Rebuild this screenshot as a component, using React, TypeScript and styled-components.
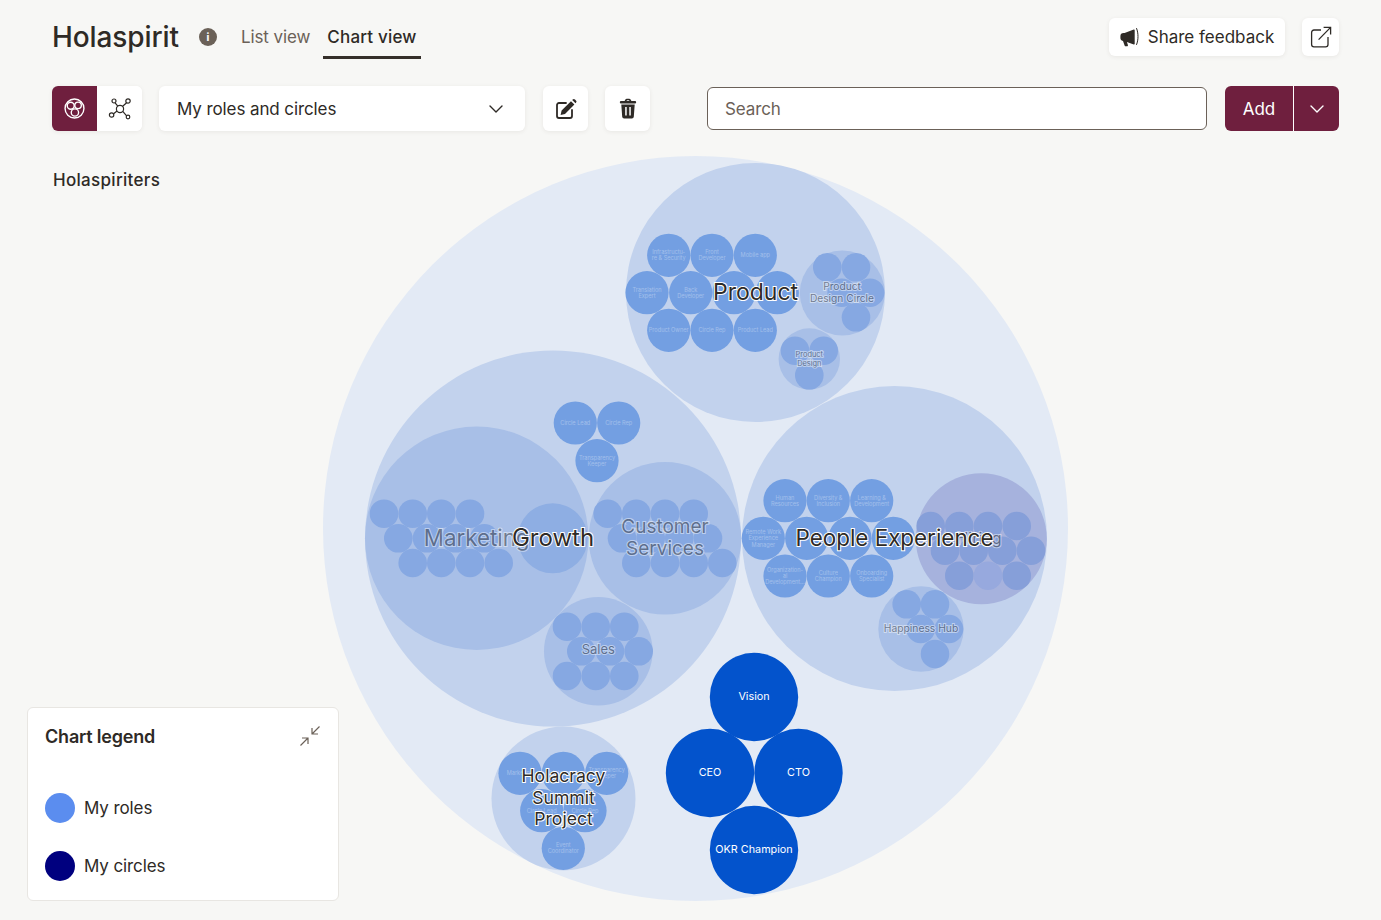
import React from 'react'
import styled, { createGlobalStyle, css } from 'styled-components'
import { ChevronDown } from 'lucide-react'

const FONT = `Inter, "Liberation Sans", sans-serif`

const GlobalStyle = createGlobalStyle`
	html, body {
		margin: 0;
		background: #f7f7f5;
		color: #2e2a26;
		font-family: ${FONT};
	}
	* { box-sizing: border-box; }
`

type Dot = [number, number]
type Role = { x: number; y: number; lines?: string[] }

const ROLE_R = 21.6
const SUB_R = 14.3

const productRoles: Role[] = [
	{ x: 668.7, y: 255.3, lines: ['Infrastructu-', 're & Security'] },
	{ x: 712, y: 255.3, lines: ['Front', 'Developer'] },
	{ x: 755.3, y: 255.3, lines: ['Mobile app'] },
	{ x: 647, y: 292.7, lines: ['Translation', 'Expert'] },
	{ x: 690.7, y: 292.7, lines: ['Back', 'Developer'] },
	{ x: 734, y: 292.7 },
	{ x: 777.3, y: 292.7 },
	{ x: 668.7, y: 330.3, lines: ['Product Owner'] },
	{ x: 712, y: 330.3, lines: ['Circle Rep'] },
	{ x: 755.3, y: 330.3, lines: ['Product Lead'] },
]

const growthRoles: Role[] = [
	{ x: 575.3, y: 423, lines: ['Circle Lead'] },
	{ x: 618.7, y: 423, lines: ['Circle Rep'] },
	{ x: 597, y: 460.7, lines: ['Transparency', 'Keeper'] },
]

const peopleRoles: Role[] = [
	{ x: 785, y: 500.7, lines: ['Human', 'Resources'] },
	{ x: 828.3, y: 500.7, lines: ['Diversity &', 'Inclusion'] },
	{ x: 871.7, y: 500.7, lines: ['Learning &', 'Development'] },
	{ x: 763.3, y: 538.3, lines: ['Remote Work', 'Experience', 'Manager'] },
	{ x: 806.7, y: 538.3 },
	{ x: 850, y: 538.3 },
	{ x: 893.3, y: 538.3 },
	{ x: 785, y: 576, lines: ['Organization-', 'al', 'Development…'] },
	{ x: 828.3, y: 576, lines: ['Culture', 'Champion'] },
	{ x: 871.7, y: 576, lines: ['Onboarding', 'Specialist'] },
]

const summitRoles: Role[] = [
	{ x: 520, y: 773.3, lines: ['Marketing'] },
	{ x: 563.3, y: 773.3, lines: ['Holacracy'] },
	{ x: 606.7, y: 773.3, lines: ['Transparency', 'Keeper'] },
	{ x: 541.7, y: 810.7, lines: ['Circle Lead'] },
	{ x: 585, y: 810.7, lines: ['Circle Rep'] },
	{ x: 563.3, y: 848.3, lines: ['Event', 'Coordinator'] },
]

const myRoles = [
	{ x: 754, y: 697, label: 'Vision' },
	{ x: 710, y: 773, label: 'CEO' },
	{ x: 798.5, y: 773, label: 'CTO' },
	{ x: 754, y: 850, label: 'OKR Champion' },
]

const designCircle: Dot[] = [[827.3, 267.3], [856, 267.3], [841.7, 292.7], [870, 292.7], [856, 317.3]]
const productDesign: Dot[] = [[795, 350.7], [823.7, 350.7], [809.3, 375.3]]
const marketing: Dot[] = [
	[384, 513.7], [412.7, 513.7], [441.3, 513.7], [470, 513.7],
	[398.3, 538.3], [427, 538.3], [455.7, 538.3], [484.3, 538.3],
	[412.7, 563], [441.3, 563], [470, 563], [498.7, 563],
]
const customer: Dot[] = [
	[607.7, 513.7], [636.3, 513.7], [665, 513.7], [693.7, 513.7],
	[622, 538.3], [650.7, 538.3], [679.3, 538.3], [708, 538.3],
	[636.3, 563], [665, 563], [693.7, 563], [722.3, 563],
]
const sales: Dot[] = [
	[567, 626.7], [595.7, 626.7], [624.3, 626.7],
	[581.3, 651.3], [610, 651.3], [638.7, 651.3],
	[567, 676], [595.7, 676], [624.3, 676],
]
const hiring: Dot[] = [
	[930.7, 526], [959.3, 526], [988, 526], [1016.7, 526],
	[945, 550.7], [973.7, 550.7], [1002.3, 550.7], [1031, 550.7],
	[959.3, 575.7], [1016.7, 575.7],
]
const happiness: Dot[] = [[906.7, 604.3], [935, 604.3], [920.7, 629], [949, 629], [935, 654]]

const Page = styled.div`
	width: 1381px;
	height: 920px;
	overflow: hidden;
	display: flex;
	flex-direction: column;
`

const Header = styled.header`
	display: flex;
	align-items: center;
	height: 58px;
	margin-top: 8px;
	padding: 0 42px 0 52px;
`

const Title = styled.h1`
	margin: 0 20px 0 0;
	font-size: 28px;
	font-weight: 500;
	letter-spacing: -0.1px;
`

const InfoDot = styled.span`
	display: flex;
	align-items: center;
	justify-content: center;
	width: 18px;
	height: 18px;
	margin-right: 20px;
	border-radius: 50%;
	background: #6b6158;
	color: #f7f7f5;
	font-size: 10px;
	font-weight: 800;
`

const Tab = styled.a<{ $active?: boolean }>`
	display: flex;
	align-items: center;
	height: 44px;
	padding: 2px 4px 0;
	margin-right: 9px;
	margin-top: 0;
	font-size: 17px;
	letter-spacing: -0.1px;
	color: #6b6158;
	border-bottom: 3px solid transparent;
	${(p) =>
		p.$active &&
		css`
			color: #2e2a26;
			font-weight: 500;
			letter-spacing: 0.2px;
			border-bottom-color: #352f2a;
		`}
`

const HeaderSpacer = styled.div`
	flex: 1;
`

const CardButton = styled.button`
	display: flex;
	align-items: center;
	justify-content: center;
	gap: 8px;
	height: 38px;
	border: none;
	border-radius: 6px;
	background: #fff;
	box-shadow: 0 1px 4px rgba(60, 50, 40, 0.08);
	color: #2e2a26;
	font-family: ${FONT};
	font-size: 17px;
	padding: 0;
`

const FeedbackButton = styled(CardButton)`
	width: 176px;
	margin-right: 17px;
`

const LinkButton = styled(CardButton)`
	width: 37px;
`

const Toolbar = styled.div`
	display: flex;
	align-items: center;
	height: 45px;
	margin-top: 20px;
	padding: 0 42px 0 52px;
`

const Switch = styled.div`
	display: flex;
	width: 90px;
	height: 45px;
	margin-right: 17px;
	border-radius: 6px;
	overflow: hidden;
	background: #fff;
	box-shadow: 0 1px 4px rgba(60, 50, 40, 0.08);
`

const SwitchItem = styled.div<{ $active?: boolean }>`
	flex: 1;
	display: flex;
	align-items: center;
	justify-content: center;
	background: ${(p) => (p.$active ? '#6f1f3e' : '#fff')};
	color: ${(p) => (p.$active ? '#fff' : '#2e2a26')};
`

const SelectBox = styled.div`
	display: flex;
	align-items: center;
	justify-content: space-between;
	width: 366px;
	height: 45px;
	margin-right: 18px;
	padding: 0 17px 0 18px;
	border-radius: 6px;
	background: #fff;
	box-shadow: 0 1px 4px rgba(60, 50, 40, 0.08);
	font-size: 17px;
	letter-spacing: -0.1px;
`

const IconButton = styled(CardButton)`
	width: 45px;
	height: 45px;
	margin-right: 17px;
`

const SearchInput = styled.input`
	width: 500px;
	height: 43px;
	margin: 0 18px 0 40px;
	padding: 0 17px;
	border: 1px solid #6b6158;
	border-radius: 6px;
	background: #fff;
	font-family: ${FONT};
	font-size: 17px;
	letter-spacing: -0.1px;
	outline: none;
	&::placeholder {
		color: #6b6158;
		opacity: 1;
	}
`

const AddGroup = styled.div`
	display: flex;
	width: 114px;
	height: 45px;
	border-radius: 6px;
	overflow: hidden;
	background: #6f1f3e;
	color: #fff;
	font-size: 17px;
`

const AddLabel = styled.div`
	display: flex;
	align-items: center;
	justify-content: center;
	width: 69px;
	border-right: 1px solid #fff;
`

const AddCaret = styled.div`
	flex: 1;
	display: flex;
	align-items: center;
	justify-content: center;
`

const Stage = styled.main`
	position: relative;
	flex: 1;
`

const Chart = styled.svg`
	display: block;
	font-family: ${FONT};
`

const PeopleLabel = styled.div`
	position: absolute;
	left: 53px;
	top: 39px;
	font-size: 17px;
	font-weight: 500;
	letter-spacing: 0.3px;
`

const Legend = styled.aside`
	position: absolute;
	left: 27px;
	bottom: 19px;
	width: 312px;
	height: 194px;
	padding: 17px 17px 0 17px;
	background: #fff;
	border: 1px solid #e8e6e2;
	border-radius: 6px;
`

const LegendHead = styled.div`
	display: flex;
	align-items: flex-start;
	justify-content: space-between;
	height: 68px;
`

const LegendTitle = styled.div`
	font-size: 18px;
	font-weight: 600;
	letter-spacing: -0.2px;
	line-height: 24px;
`

const LegendRow = styled.div`
	display: flex;
	align-items: center;
	gap: 9px;
	height: 30px;
	margin-bottom: 28px;
	font-size: 17px;
	letter-spacing: -0.1px;
`

const Swatch = styled.span<{ $color: string }>`
	width: 30px;
	height: 30px;
	border-radius: 50%;
	background: ${(p) => p.$color};
`

const BigLabel = styled.text<{ $size: number; $faded?: boolean }>`
	font-size: ${(p) => p.$size}px;
	text-anchor: middle;
	fill: #2e2a26;
	stroke: #fff;
	stroke-width: 2px;
	paint-order: stroke;
	opacity: ${(p) => (p.$faded ? 0.45 : 1)};
`

const RoleText = styled.text`
	font-size: 5.6px;
	text-anchor: middle;
	fill: #fff;
	opacity: 0.32;
`

const MyRoleText = styled.text`
	font-size: 10.8px;
	text-anchor: middle;
	fill: #fff;
`

const PackIcon = () => (
	<svg width="21" height="21" viewBox="0 0 20 20" fill="none" stroke="currentColor" strokeWidth="1.3">
		<circle cx="10" cy="10" r="9" />
		<circle cx="6.4" cy="7.4" r="3.3" />
		<circle cx="13.4" cy="7" r="3.1" />
		<circle cx="10.4" cy="13.8" r="3.5" />
	</svg>
)

const GraphIcon = () => (
	<svg width="24" height="24" viewBox="0 0 24 24" fill="none" stroke="currentColor" strokeWidth="1.2">
		<circle cx="12" cy="12" r="3.6" />
		<circle cx="6" cy="4" r="2" />
		<circle cx="20" cy="4" r="2.2" />
		<circle cx="3.6" cy="18" r="2.2" />
		<circle cx="20" cy="20" r="1.8" />
		<path d="M7.1 5.8 9.8 9.2M18.6 5.8 14.4 9.5M5.6 16.8 9 14M18.6 18.8 14.8 14.4" />
	</svg>
)

const EditIcon = () => (
	<svg width="22" height="22" viewBox="0 0 22 22" fill="none">
		<path
			d="M11 5H4a2 2 0 0 0-2 2v11a2 2 0 0 0 2 2h11a2 2 0 0 0 2-2v-6"
			stroke="currentColor"
			strokeWidth="1.8"
			strokeLinecap="round"
		/>
		<path
			d="M6.6 12.6 16 3.2l3.4 3.4-9.4 9.4-4.4 1ZM17.2 2l.5-.5a1.6 1.6 0 0 1 2.3 0l.9.9a1.6 1.6 0 0 1 0 2.3l-.4.5Z"
			fill="currentColor"
		/>
	</svg>
)

const TrashIcon = () => (
	<svg width="18" height="21" viewBox="0 0 18 21" fill="currentColor">
		<path d="M5.6 3 6.4 1.5C6.7 1 7.2.7 7.8.7h2.4c.6 0 1.1.3 1.4.8L12.4 3H16a1 1 0 0 1 0 2.4H2A1 1 0 0 1 2 3Zm1.9 0h3L10 2.2H8Z" fillRule="evenodd" />
		<path d="M2.3 6.4h13.4l-.9 12.4a1.9 1.9 0 0 1-1.9 1.7H5.1a1.9 1.9 0 0 1-1.9-1.7ZM6.2 9v8.6h1.5V9Zm4.1 0v8.6h1.5V9Z" fillRule="evenodd" />
	</svg>
)

const MegaphoneIcon = () => (
	<svg width="20" height="21" viewBox="0 0 20 21" fill="currentColor">
		<path d="M13.8 2.6 4.6 6H3.6A3.2 3.2 0 0 0 .4 9.2v1.6A3.2 3.2 0 0 0 3 14l1.6 4.4c.2.6.6.9 1.2.9h1.1c.8 0 1.2-.6 1-1.3l-1-3 6.9 2.4c.5.2.9-.1.9-.6V3.2c0-.5-.4-.8-.9-.6Z" />
		<path d="M16.6 1.5c1.9 4.6 1.9 11.4 0 16" fill="none" stroke="currentColor" strokeWidth="1" strokeLinecap="round" />
	</svg>
)

const OpenIcon = () => (
	<svg width="22" height="22" viewBox="0 0 22 22" fill="none" stroke="currentColor" strokeWidth="1.3">
		<path d="M11 4H4a2.4 2.4 0 0 0-2.4 2.4v12A2.4 2.4 0 0 0 4 20.8h11.6a2.4 2.4 0 0 0 2.4-2.4V11" />
		<path d="M8.6 13.6 20.6 1.4M13.6 1.4h7v7" />
	</svg>
)

const CollapseIcon = () => (
	<svg width="22" height="22" viewBox="0 0 22 22" fill="none" stroke="#6b6158" strokeWidth="1.2">
		<path d="M1.5 20.5 9 13M3 13h6v6M20.5 1.5 13 9M13 3v6h6" />
	</svg>
)

const Circles = ({ dots, r, fill }: { dots: Dot[]; r: number; fill: string }) => (
	<>
		{dots.map(([x, y]) => (
			<circle key={`${x}-${y}`} cx={x} cy={y} r={r} fill={fill} />
		))}
	</>
)

const Roles = ({ roles }: { roles: Role[] }) => (
	<>
		{roles.map((role) => (
			<g key={`${role.x}-${role.y}`}>
				<circle cx={role.x} cy={role.y} r={ROLE_R} fill="#739fe2" />
				{role.lines?.map((line, i) => (
					<RoleText key={line} x={role.x} y={role.y + 2 + (i - (role.lines!.length - 1) / 2) * 6.3}>
						{line}
					</RoleText>
				))}
			</g>
		))}
	</>
)

const App: React.FC = () => {
	// the chart keeps page coordinates, the stage begins under the toolbar
	const top = 131
	return (
		<Page>
			<GlobalStyle />
			<Header>
				<Title>Holaspirit</Title>
				<InfoDot>i</InfoDot>
				<Tab>List view</Tab>
				<Tab $active>Chart view</Tab>
				<HeaderSpacer />
				<FeedbackButton>
					<MegaphoneIcon />
					Share feedback
				</FeedbackButton>
				<LinkButton>
					<OpenIcon />
				</LinkButton>
			</Header>
			<Toolbar>
				<Switch>
					<SwitchItem $active>
						<PackIcon />
					</SwitchItem>
					<SwitchItem>
						<GraphIcon />
					</SwitchItem>
				</Switch>
				<SelectBox>
					My roles and circles
					<ChevronDown size={24} strokeWidth={1.4} />
				</SelectBox>
				<IconButton>
					<EditIcon />
				</IconButton>
				<IconButton>
					<TrashIcon />
				</IconButton>
				<SearchInput placeholder="Search" />
				<AddGroup>
					<AddLabel>Add</AddLabel>
					<AddCaret>
						<ChevronDown size={24} strokeWidth={1.4} />
					</AddCaret>
				</AddGroup>
			</Toolbar>
			<Stage>
				<Chart width="1381" height="789" viewBox={`0 ${top} 1381 789`}>
					<circle cx={695.5} cy={528.5} r={372.5} fill="#e3eaf5" />

					<circle cx={755.5} cy={292.5} r={129.5} fill="#c2d2ed" />
					<Roles roles={productRoles} />
					<circle cx={842.3} cy={293} r={42.5} fill="#a8bfe7" />
					<Circles dots={designCircle} r={SUB_R} fill="#86a8e2" />
					<circle cx={809.3} cy={359} r={30.7} fill="#a8bfe7" />
					<Circles dots={productDesign} r={SUB_R} fill="#86a8e2" />

					<circle cx={553} cy={538.5} r={188} fill="#c2d2ed" />
					<Roles roles={growthRoles} />
					<circle cx={476.7} cy={538.3} r={111.7} fill="#a8bfe7" />
					<Circles dots={marketing} r={SUB_R} fill="#86a8e2" />
					<circle cx={552.7} cy={538.3} r={35} fill="#8eaee3" />
					<circle cx={665} cy={538.3} r={76.3} fill="#a8bfe7" />
					<Circles dots={customer} r={SUB_R} fill="#86a8e2" />
					<circle cx={598.3} cy={651.3} r={54.3} fill="#a8bfe7" />
					<Circles dots={sales} r={SUB_R} fill="#86a8e2" />

					<circle cx={894.5} cy={538.5} r={152.5} fill="#c2d2ed" />
					<Roles roles={peopleRoles} />
					<circle cx={981.3} cy={538.7} r={65.5} fill="#a6b2dd" />
					<Circles dots={hiring} r={SUB_R} fill="#869fd9" />
					<circle cx={988} cy={575.7} r={SUB_R} fill="#97a9de" />
					<circle cx={921} cy={629} r={42.7} fill="#a8bfe7" />
					<Circles dots={happiness} r={SUB_R} fill="#86a8e2" />

					<circle cx={563.5} cy={798.5} r={72} fill="#c2d2ed" />
					<Roles roles={summitRoles} />

					{myRoles.map((role) => (
						<g key={role.label}>
							<circle cx={role.x} cy={role.y} r={44.2} fill="#0353cc" />
							<MyRoleText x={role.x} y={role.y + 3}>
								{role.label}
							</MyRoleText>
						</g>
					))}

					<BigLabel $size={10.2} $faded x={842} y={290}>Product</BigLabel>
					<BigLabel $size={10.2} $faded x={842} y={302}>Design Circle</BigLabel>
					<BigLabel $size={7.4} $faded x={809.3} y={357}>Product</BigLabel>
					<BigLabel $size={7.4} $faded x={809.3} y={366}>Design</BigLabel>
					<BigLabel $size={22.3} $faded x={476.7} y={546}>Marketing</BigLabel>
					<BigLabel $size={19} $faded x={665} y={533}>Customer</BigLabel>
					<BigLabel $size={19} $faded x={665} y={555}>Services</BigLabel>
					<BigLabel $size={13} $faded x={598.3} y={654}>Sales</BigLabel>
					<BigLabel $size={10.3} $faded x={921} y={632}>Happiness Hub</BigLabel>
					<BigLabel $size={16} $faded x={979} y={544}>Hiring</BigLabel>
					<BigLabel $size={23} x={755.5} y={300}>Product</BigLabel>
					<BigLabel $size={24} x={553} y={546}>Growth</BigLabel>
					<BigLabel $size={22.4} x={894.5} y={546}>People Experience</BigLabel>
					<BigLabel $size={17.6} x={563.5} y={782}>Holacracy</BigLabel>
					<BigLabel $size={17.6} x={563.5} y={803.5}>Summit</BigLabel>
					<BigLabel $size={17.6} x={563.5} y={825}>Project</BigLabel>
				</Chart>
				<PeopleLabel>Holaspiriters</PeopleLabel>
				<Legend>
					<LegendHead>
						<LegendTitle>Chart legend</LegendTitle>
						<CollapseIcon />
					</LegendHead>
					<LegendRow>
						<Swatch $color="#5b8def" />
						My roles
					</LegendRow>
					<LegendRow>
						<Swatch $color="#00007f" />
						My circles
					</LegendRow>
				</Legend>
			</Stage>
		</Page>
	)
}

export default App
